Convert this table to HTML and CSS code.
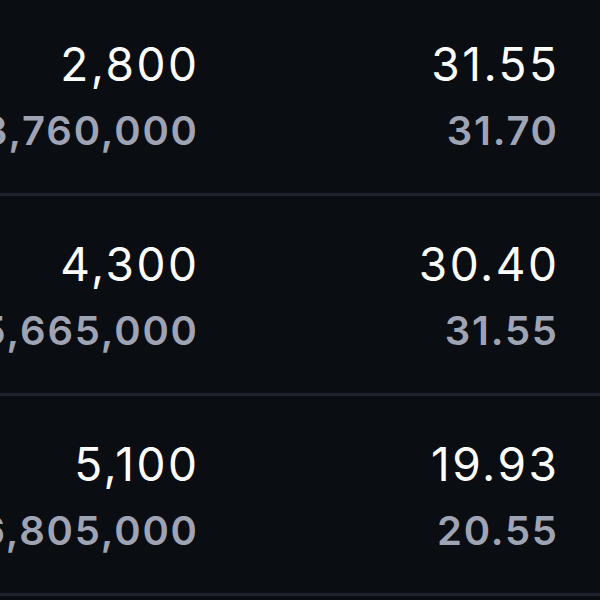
FILE: index.html
```html
<!DOCTYPE html>
<html>
<head>
<meta charset="utf-8">
<link rel="stylesheet" href="styles.css">
</head>
<body>
<div class="table">
  <div class="row">
    <div class="cell"><div class="main">2,800</div><div class="sub">3,760,000</div></div>
    <div class="cell"><div class="main">31.55</div><div class="sub">31.70</div></div>
  </div>
  <div class="row">
    <div class="cell"><div class="main">4,300</div><div class="sub">5,665,000</div></div>
    <div class="cell"><div class="main">30.40</div><div class="sub">31.55</div></div>
  </div>
  <div class="row">
    <div class="cell"><div class="main">5,100</div><div class="sub">6,805,000</div></div>
    <div class="cell"><div class="main">19.93</div><div class="sub">20.55</div></div>
  </div>
</div>
</body>
</html>
```
FILE: styles.css
```css
html, body {
  margin: 0;
  padding: 0;
  background: #0a0d12;
  overflow: hidden;
}
body {
  font-family: Inter, "Noto Sans", sans-serif;
  width: 600px;
  height: 600px;
}
.table {
  margin-top: -4px;
}
.row {
  height: 197px;
  border-bottom: 3px solid #1e222c;
  display: grid;
  grid-template-columns: 197px 360px;
  padding-right: 43px;
  box-sizing: content-box;
}
.cell {
  text-align: right;
  white-space: nowrap;
  display: flex;
  flex-direction: column;
  align-items: flex-end;
  padding-top: 43px;
}
.main {
  color: #ffffff;
  font-size: 46px;
  font-weight: 400;
  line-height: 50px;
  letter-spacing: 2.5px;
  margin-right: -2.5px;
}
.sub {
  color: #9ea4b3;
  font-size: 40px;
  font-weight: 600;
  line-height: 44px;
  margin-top: 20px;
  letter-spacing: 1.8px;
  margin-right: -1.8px;
}
```
